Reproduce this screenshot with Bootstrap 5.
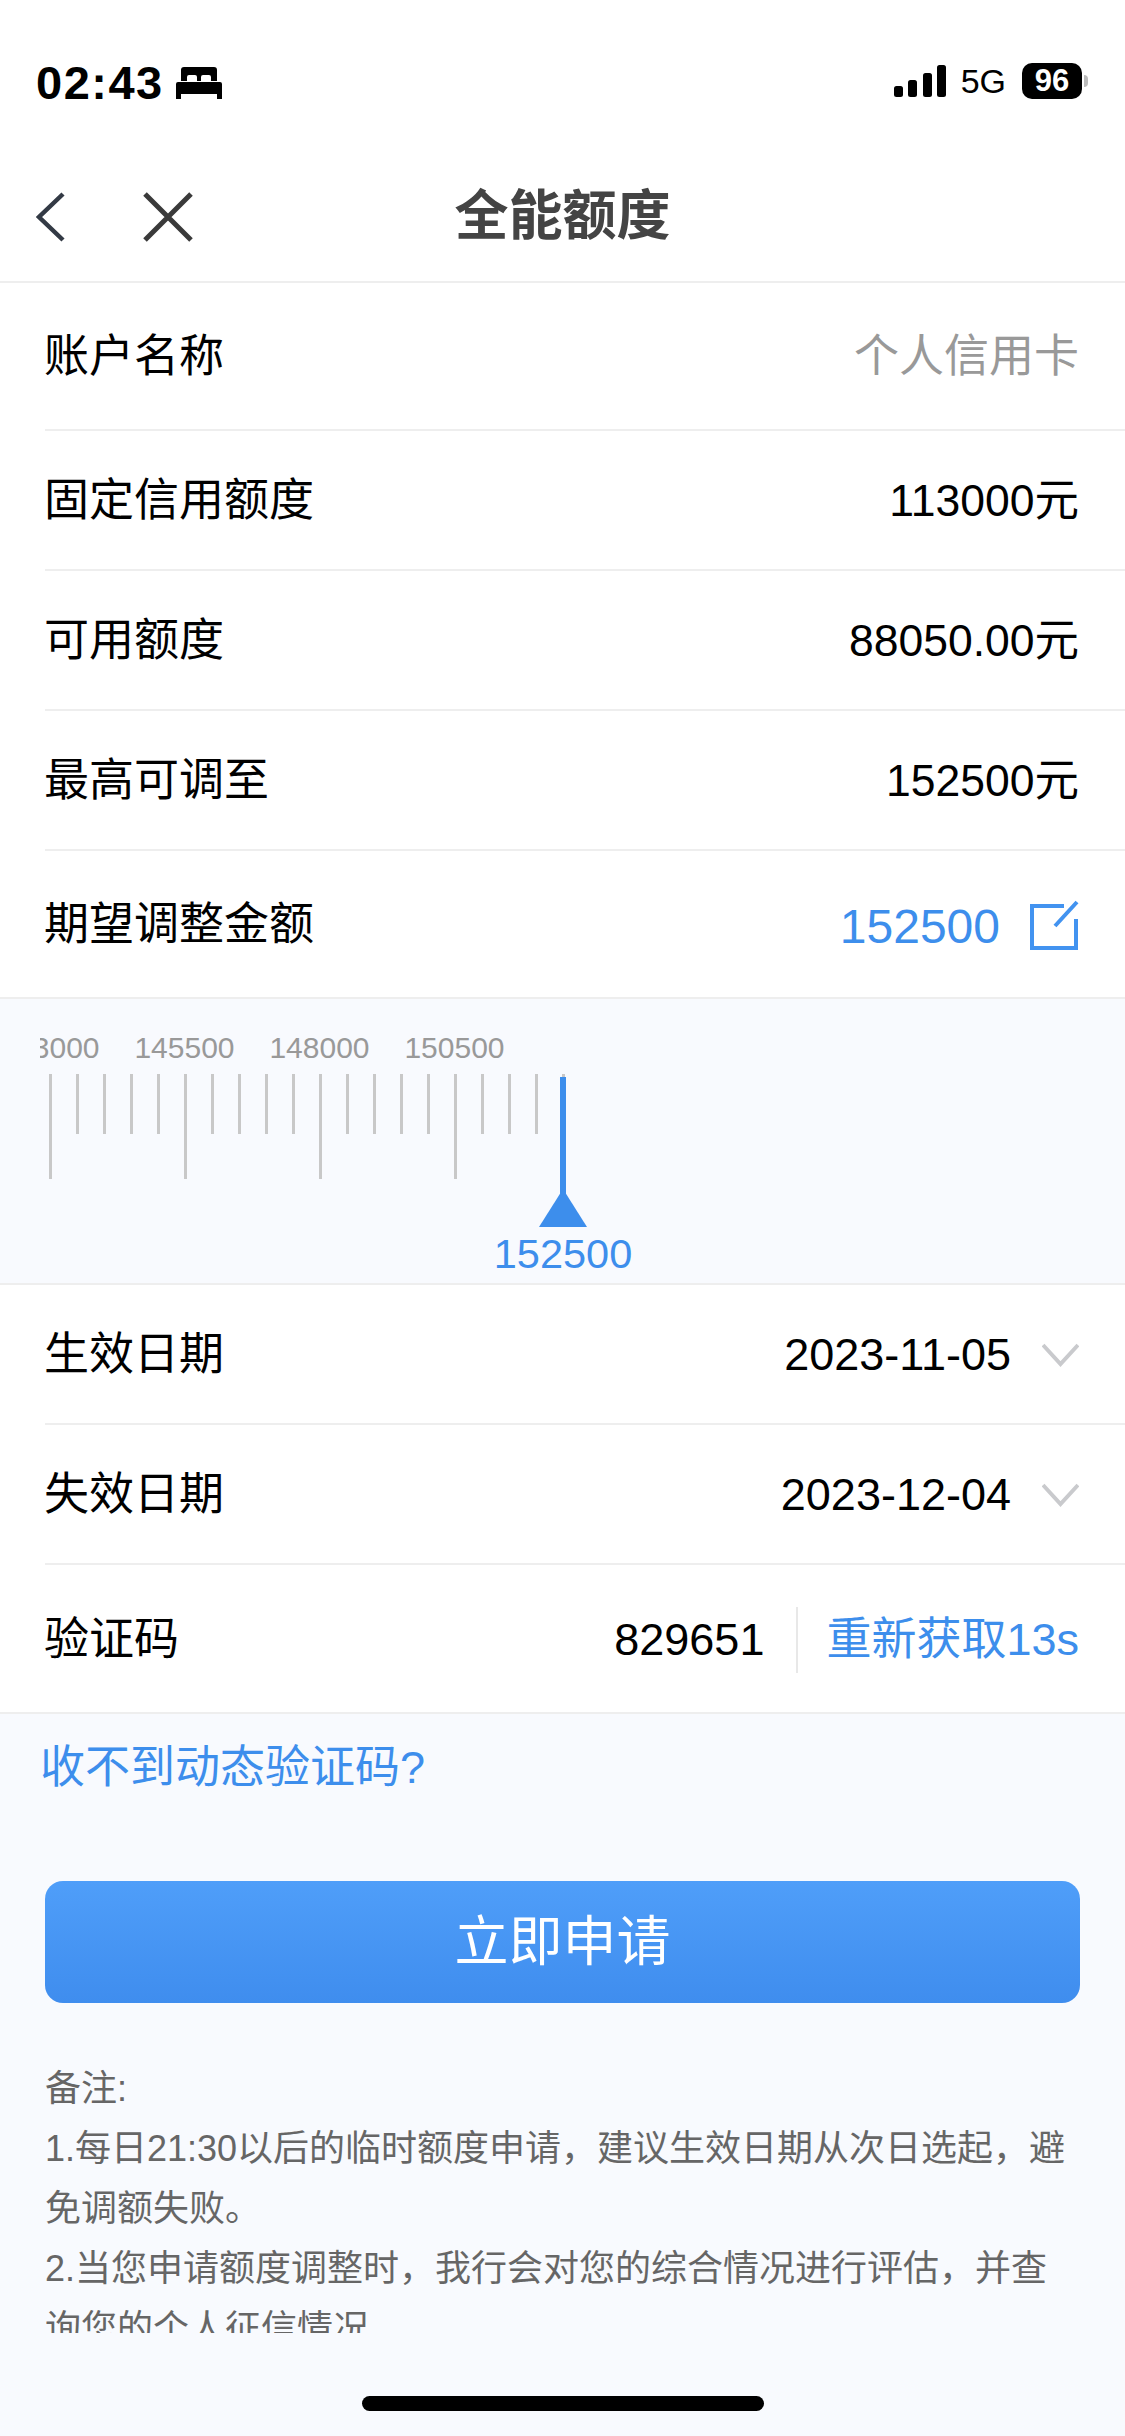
<!DOCTYPE html>
<html lang="zh-CN">
<head>
  <meta charset="utf-8" />
  <meta name="viewport" content="width=device-width, initial-scale=1" />
  <title>全能额度</title>
  <link href="https://cdn.jsdelivr.net/npm/bootstrap@5.3.3/dist/css/bootstrap.min.css" rel="stylesheet" />
  <script src="https://cdn.jsdelivr.net/npm/bootstrap@5.3.3/dist/js/bootstrap.bundle.min.js"></script>
  <style>
    body {
      font-family: "Liberation Sans", "Noto Sans CJK SC", sans-serif;
      background: #f8fafe;
      color: #000;
      width: 1125px;
      height: 2436px;
      overflow: hidden;
    }
    .status-bar {
      height: 120px;
      padding: 61px 37px 0 36px;
      background: #fff;
    }
    .clock {
      font-size: 47px;
      font-weight: 700;
      line-height: 44px;
      letter-spacing: 1.5px;
    }
    .status-left {
      gap: 12px;
    }
    .net-label {
      font-size: 34px;
      line-height: 40px;
      margin: 0 16px 0 15px;
    }
    .batt {
      width: 60px;
      height: 36px;
      border-radius: 10px;
      background: #000;
      color: #fff;
      font-size: 31px;
      font-weight: 700;
      line-height: 36px;
      text-align: center;
    }
    .batt-nub {
      width: 4px;
      height: 12px;
      margin-left: 2px;
      border-radius: 0 4px 4px 0;
      background: #bbb;
    }
    .head-bar {
      display: grid;
      grid-template-columns: 1fr auto 1fr;
      align-items: center;
      height: 163px;
      padding: 32px 36px 0;
      background: #fff;
      border-bottom: 2px solid #eee;
    }
    .head-title {
      font-size: 54px;
      font-weight: 700;
      color: #444;
    }
    .head-close {
      margin-left: 76px;
    }
    .line-row {
      display: flex;
      align-items: center;
      justify-content: space-between;
      height: 140px;
      padding: 2px 46px 0 0;
      margin-left: 45px;
      border-bottom: 2px solid #eee;
      font-size: 45px;
    }
    .line-wrap {
      background: #fff;
    }
    .line-row.tall {
      height: 148px;
    }
    .line-row.last {
      margin-left: 0;
      padding-left: 45px;
    }
    .line-row.code-row {
      height: 149px;
    }
    .row-label {
      font-size: 45px;
      margin-left: -1px;
    }
    .row-amount {
      font-size: 44.5px;
    }
    .value-edit {
      font-size: 48px;
      margin-right: 29px;
      padding-top: 4px;
    }
    .date-arrow {
      margin-left: 31px;
    }
    .txt-blue {
      color: #3d8eec;
    }
    .txt-grey {
      color: #999;
    }
    .ruler {
      height: 286px;
      padding-top: 32px;
      position: relative;
      background: #f8fafe;
      border-bottom: 2px solid #eee;
    }
    .ruler-labels {
      display: flex;
      width: 520px;
      margin-left: 40px;
      overflow: hidden;
      color: #999;
      font-size: 30px;
      line-height: 34px;
    }
    .ruler-labels span {
      flex: 0 0 135px;
      text-align: center;
    }
    .ruler-labels span:first-child {
      margin-left: -58px;
    }
    .ruler-ticks {
      display: flex;
      align-items: flex-start;
      margin: 9px 0 0 49px;
    }
    .tick {
      flex: 0 0 27px;
    }
    .tick::before {
      content: "";
      display: block;
      width: 3px;
      height: 60px;
      background: #c8c8c8;
    }
    .tick.big::before {
      height: 105px;
    }
    .ruler-mark {
      position: absolute;
      left: 493px;
      top: 78px;
      width: 140px;
      text-align: center;
      font-size: 41.5px;
      line-height: 46px;
    }
    .ruler-mark svg {
      display: block;
      margin: 0 auto 4px;
    }
    .code-sep {
      width: 2px;
      height: 66px;
      margin: 0 28px 0 32px;
      background: #e8e8e8;
    }
    .no-code {
      font-size: 45px;
      line-height: 54px;
      padding: 27px 0 0 40px;
    }
    .apply-btn {
      display: block;
      width: 1035px;
      height: 122px;
      margin: 86px 0 0 45px;
      padding: 0;
      border: 0;
      border-radius: 18px;
      background: linear-gradient(#4f9ef9, #3f8dee);
      color: #fff;
      font-size: 54px;
    }
    .notes {
      width: 1030px;
      height: 274px;
      margin: 56px 0 0 45px;
      overflow: hidden;
      color: #666;
      font-size: 36px;
      line-height: 60px;
    }
    .home-bar {
      width: 402px;
      height: 15px;
      margin: 63px auto 0;
      border-radius: 8px;
      background: #000;
    }
  </style>
</head>
<body>
  <!-- status bar -->
  <div class="status-bar d-flex justify-content-between align-items-start">
    <div class="status-left d-flex align-items-center">
      <span class="clock">02:43</span>
      <svg width="46" height="32" viewBox="0 0 46 32">
        <path d="M5 2a3 3 0 0 1 3-3h30a3 3 0 0 1 3 3v11h-6v-4a2 2 0 0 0-2-2h-6a2 2 0 0 0-2 2v4h-4v-4a2 2 0 0 0-2-2h-6a2 2 0 0 0-2 2v4H5z" transform="translate(0 1)" />
        <path d="M0 17a2 2 0 0 1 2-2h42a2 2 0 0 1 2 2v15h-5v-5H5v5H0z" />
      </svg>
    </div>
    <div class="d-flex align-items-center">
      <svg width="52" height="32" viewBox="0 0 52 32">
        <rect x="0" y="21" width="9" height="11" rx="2.5" />
        <rect x="14" y="15" width="9" height="17" rx="2.5" />
        <rect x="29" y="8" width="9" height="24" rx="2.5" />
        <rect x="43" y="0" width="9" height="32" rx="2.5" />
      </svg>
      <span class="net-label">5G</span>
      <span class="batt">96</span>
      <span class="batt-nub"></span>
    </div>
  </div>

  <!-- header -->
  <div class="head-bar">
    <div class="d-flex align-items-center">
      <svg width="30" height="50" viewBox="0 0 30 50" fill="none" stroke="#333a45" stroke-width="4.5">
        <path d="M27 2 3 25l24 23" />
      </svg>
      <svg class="head-close" width="52" height="50" viewBox="0 0 52 50" fill="none" stroke="#3a3a3a" stroke-width="5">
        <path d="M3 2l46 46M49 2 3 48" />
      </svg>
    </div>
    <div class="head-title">全能额度</div>
    <div></div>
  </div>

  <!-- account rows -->
  <div class="line-wrap">
    <div class="line-row tall">
      <span class="row-label">账户名称</span>
      <span class="txt-grey">个人信用卡</span>
    </div>
    <div class="line-row">
      <span class="row-label">固定信用额度</span>
      <span class="row-amount">113000元</span>
    </div>
    <div class="line-row">
      <span class="row-label">可用额度</span>
      <span class="row-amount">88050.00元</span>
    </div>
    <div class="line-row">
      <span class="row-label">最高可调至</span>
      <span class="row-amount">152500元</span>
    </div>
    <div class="line-row tall last">
      <span class="row-label">期望调整金额</span>
      <span class="d-flex align-items-center txt-blue">
        <span class="value-edit">152500</span>
        <svg width="50" height="50" viewBox="0 0 50 50" fill="none" stroke="#4293f0" stroke-width="4">
          <path d="M35 6H3v42h44V19M26 26 48 2" />
        </svg>
      </span>
    </div>
  </div>

  <!-- ruler -->
  <div class="ruler">
    <div class="ruler-labels">
      <span>143000</span><span>145500</span><span>148000</span><span>150500</span>
    </div>
    <div class="ruler-ticks">
      <i class="tick big"></i><i class="tick"></i><i class="tick"></i><i class="tick"></i><i class="tick"></i>
      <i class="tick big"></i><i class="tick"></i><i class="tick"></i><i class="tick"></i><i class="tick"></i>
      <i class="tick big"></i><i class="tick"></i><i class="tick"></i><i class="tick"></i><i class="tick"></i>
      <i class="tick big"></i><i class="tick"></i><i class="tick"></i><i class="tick"></i><i class="tick"></i>
    </div>
    <div class="ruler-mark txt-blue">
      <svg width="48" height="150" viewBox="0 0 48 150" fill="#3d8eec">
        <rect x="21" y="0" width="6" height="120" />
        <path d="M24 112 48 150H0z" />
      </svg>
      152500
    </div>
  </div>

  <!-- date rows -->
  <div class="line-wrap">
    <div class="line-row">
      <span class="row-label">生效日期</span>
      <span class="d-flex align-items-center">
        2023-11-05
        <svg class="date-arrow" width="37" height="24" viewBox="0 0 37 24" fill="none" stroke="#c9cacd" stroke-width="4">
          <path d="M1 2l17.5 19L36 2" />
        </svg>
      </span>
    </div>
    <div class="line-row">
      <span class="row-label">失效日期</span>
      <span class="d-flex align-items-center">
        2023-12-04
        <svg class="date-arrow" width="37" height="24" viewBox="0 0 37 24" fill="none" stroke="#c9cacd" stroke-width="4">
          <path d="M1 2l17.5 19L36 2" />
        </svg>
      </span>
    </div>
    <div class="line-row last code-row">
      <span class="row-label">验证码</span>
      <span class="d-flex align-items-center">
        829651
        <span class="code-sep"></span>
        <span class="txt-blue">重新获取13s</span>
      </span>
    </div>
  </div>

  <div class="no-code txt-blue">收不到动态验证码?</div>

  <button type="button" class="btn apply-btn">立即申请</button>

  <div class="notes">
    备注:<br />
    1.每日21:30以后的临时额度申请，建议生效日期从次日选起，避免调额失败。<br />
    2.当您申请额度调整时，我行会对您的综合情况进行评估，并查询您的个人征信情况
  </div>

  <div class="home-bar"></div>
</body>
</html>
